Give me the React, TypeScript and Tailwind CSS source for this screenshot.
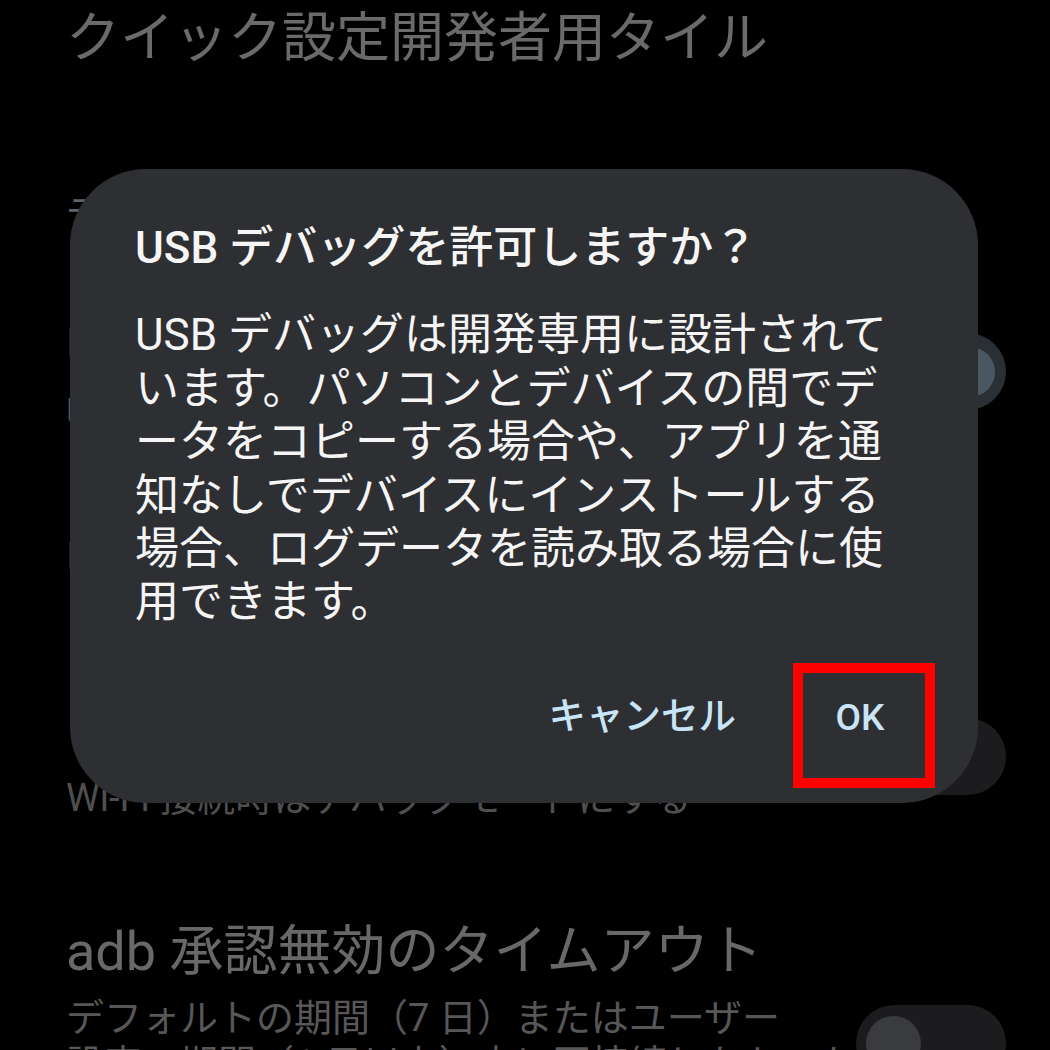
const jp = "font-['Roboto','Noto_Sans_CJK_JP',sans-serif]";

function Toggle({ on }: { on?: boolean }) {
  return (
    <div
      className={
        on
          ? "flex h-[77px] w-[150px] items-center justify-end rounded-full bg-[#2a2f35] px-[11px]"
          : "flex h-[77px] w-[150px] items-center justify-start rounded-full bg-[#1c1c1e] px-[10px]"
      }
    >
      <div
        className={
          on
            ? "h-[50px] w-[50px] rounded-full bg-[#4a5760]"
            : "h-[55px] w-[55px] rounded-full bg-[#3a3b3d]"
        }
      />
    </div>
  );
}

export default function App() {
  return (
    <div className={`relative h-[1050px] w-[1050px] overflow-hidden bg-black ${jp}`}>
      {/* settings list, dimmed behind the dialog */}
      <div className="flex flex-col pl-[66px] pr-[44px]">
        <div className="mt-[7px] whitespace-nowrap text-[54px] leading-[64px] text-[#6a6a6a]">
          クイック設定開発者用タイル
        </div>

        <div className="mt-[121px] text-[37px] leading-[46px] text-[#5b666c]">デバッグ</div>

        <div className="mt-[78px] flex items-start">
          <div className="flex min-w-0 flex-1 flex-col">
            <div className="text-[54px] leading-[64px] text-[#6a6a6a]">USB デバッグ</div>
            <div className="mt-[10px] text-[38px] leading-[46px] text-[#555555]">
              USB 接続時はデバッグモードにする
            </div>
          </div>
          <div className="mt-[17px]">
            <Toggle on />
          </div>
        </div>

        <div className="mt-[94px] text-[54px] leading-[64px] text-[#6a6a6a]">
          USB デバッグ権限の取り消し
        </div>

        <div className="mt-[107px] flex items-start">
          <div className="flex min-w-0 flex-1 flex-col">
            <div className="text-[54px] leading-[64px] text-[#6a6a6a]">ワイヤレス デバッグ</div>
            <div className="mt-[10px] whitespace-nowrap text-[38px] leading-[46px] text-[#4f4f4f]">
              Wi-Fi 接続時はデバッグモードにする
            </div>
          </div>
          <div className="mt-[17px]">
            <Toggle />
          </div>
        </div>

        <div className="mt-[99px] flex items-start">
          <div className="flex min-w-0 flex-1 flex-col">
            <div className="whitespace-nowrap text-[54px] leading-[64px] text-[#686868]">
              adb 承認無効のタイムアウト
            </div>
            <div className="mt-[11px] whitespace-nowrap text-[38px] leading-[46px] text-[#575757]">
              デフォルトの期間（7 日）またはユーザー
              <br />
              設定の期間（1 日以上）内に再接続しなかった
            </div>
          </div>
          <div className="mt-[85px]">
            <Toggle />
          </div>
        </div>
      </div>

      {/* dialog */}
      <div className="absolute left-[70px] top-[169px] flex h-[634px] w-[908px] flex-col rounded-[76px] bg-[#2e2f33] pl-[65px] pt-[53px]">
        <h2 className="whitespace-nowrap text-[44px] font-medium leading-[53.4px] text-[#f5f5f5]">
          USB デバッグを許可しますか？
        </h2>
        <p className="mt-[34px] whitespace-nowrap text-[44px] leading-[53.4px] text-[#f5f5f5]">
          USB デバッグは開発専用に設計されて
          <br />
          います。パソコンとデバイスの間でデ
          <br />
          ータをコピーする場合や、アプリを通
          <br />
          知なしでデバイスにインストールする
          <br />
          場合、ログデータを読み取る場合に使
          <br />
          用できます。
        </p>
        <div className="mt-[33px] flex items-start justify-end pr-[43px]">
          <button className="mr-[57px] mt-[30px] text-[37.5px] font-medium leading-[46px] text-[#c8e4f6]">
            キャンセル
          </button>
          <div className="flex h-[125px] w-[142px] items-start justify-center border-[10px] border-[#ff0000] pr-[8px] pt-[22px]">
            <button className="text-[37px] font-medium leading-[46px] text-[#c8e4f6]">OK</button>
          </div>
        </div>
      </div>
    </div>
  );
}
